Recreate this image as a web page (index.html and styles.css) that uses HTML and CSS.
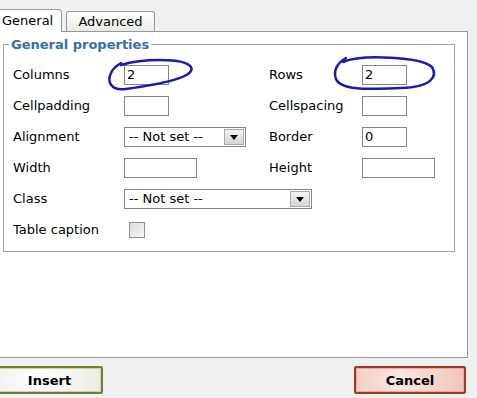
FILE: index.html
```html
<!DOCTYPE html>
<html lang="en">
<head>
    <meta charset="UTF-8">
    <title>Insert table</title>
    <link rel="stylesheet" href="styles.css">
</head>
<body>
    <div id="tabs">
        <span class="tab active">General</span>
        <span class="tab">Advanced</span>
    </div>
    <div id="panel">
        <fieldset>
            <legend>General properties</legend>
            <div class="form">
                <label>Columns</label>
                <span><input type="text" class="small" value="2"></span>
                <label>Rows</label>
                <span><input type="text" class="small" value="2"></span>

                <label>Cellpadding</label>
                <span><input type="text" class="small"></span>
                <label>Cellspacing</label>
                <span><input type="text" class="small"></span>

                <label>Alignment</label>
                <span><div class="select align">-- Not set --<span class="arrow"></span></div></span>
                <label>Border</label>
                <span><input type="text" class="small" value="0"></span>

                <label>Width</label>
                <span><input type="text" class="medium"></span>
                <label>Height</label>
                <span><input type="text" class="medium"></span>

                <label>Class</label>
                <span class="wide"><div class="select klass">-- Not set --<span class="arrow"></span></div></span>

                <label>Table caption</label>
                <span><span class="checkbox"></span></span>
            </div>
        </fieldset>
        <svg class="marks" width="469" height="120" viewBox="0 0 469 120">
            <!-- scribbles around the columns / rows fields, drawn in panel coords (y - 31) -->
            <path d="M121 33 C140 27, 184 25, 191 35 C196 45, 162 52, 126 57 C110 59, 107 49, 111 41 C113 36, 116 34, 121 31" />
            <path d="M343 30 C362 22, 421 25, 432 35 C438 45, 431 55, 401 56 C371 57, 341 59, 336 47 C333 39, 337 31, 346 26" />
        </svg>
    </div>
    <div id="buttons">
        <button type="button" class="insert">Insert</button>
        <button type="button" class="cancel">Cancel</button>
    </div>
</body>
</html>
```
FILE: styles.css
```css
body {
    margin: 0;
    background-color: #f0f0f0;
    font-family: 'DejaVu Sans', Verdana, sans-serif;
    font-size: 13px;
    color: #000000;
    overflow: hidden;
}
#tabs {
    display: flex;
    align-items: flex-end;
    height: 32px;
}
.tab {
    box-sizing: border-box;
    height: 21px;
    width: 89px;
    margin-left: 4px;
    padding-top: 2px;
    text-align: center;
    font-size: 13px;
    border: 1px solid #919b9c;
    border-bottom: none;
    border-radius: 3px 3px 0 0;
    background: linear-gradient(#ffffff, #e9e9e6);
}
.tab.active {
    position: relative;
    z-index: 1;
    width: 63px;
    height: 23px;
    margin-left: -1px;
    padding-top: 3px;
    text-align: left;
    text-indent: 2px;
    background: #ffffff;
    border-radius: 0 4px 0 0;
}
#panel {
    position: relative;
    box-sizing: border-box;
    width: 469px;
    height: 327px;
    margin: -1px 0 0 -1px;
    padding: 1px 0 0 3px;
    background-color: #ffffff;
    border: 1px solid #919b9c;
}
fieldset {
    box-sizing: border-box;
    width: 452px;
    margin: 4px 0 0 0;
    padding: 7px 0 6px 9px;
    border: 1px solid #a3a3a3;
}
legend {
    margin-left: -4px;
    padding: 0 2px;
    font-weight: bold;
    color: #3570a8;
}
.form {
    display: grid;
    grid-template-columns: 111px 145px 93px auto;
    grid-auto-rows: 31px;
    align-items: center;
}
.form span {
    display: flex;
    align-items: center;
}
.wide {
    grid-column: 2 / 5;
}
input {
    box-sizing: border-box;
    height: 20px;
    margin: 0;
    padding: 0 2px;
    border: 1px solid #858585;
    font-family: inherit;
    font-size: 13px;
    outline: none;
}
.small { width: 45px; }
.medium { width: 73px; }
.select {
    position: relative;
    box-sizing: border-box;
    height: 20px;
    padding: 1px 4px;
    border: 1px solid #858585;
    line-height: 16px;
}
.align { width: 122px; }
.klass { width: 188px; }
.arrow {
    position: absolute;
    top: 1px;
    right: 1px;
    width: 20px;
    height: 16px;
    box-sizing: border-box;
    border: 1px solid #a8a8a8;
    background: linear-gradient(#f4f4f4, #d4d4d4);
}
.arrow::after {
    content: "";
    position: absolute;
    left: 5px;
    top: 5px;
    border-left: 4px solid transparent;
    border-right: 4px solid transparent;
    border-top: 5px solid #000000;
}
.checkbox {
    width: 16px;
    height: 16px;
    margin-left: 5px;
    box-sizing: border-box;
    border: 1px solid #8f8f8f;
    background: linear-gradient(135deg, #dcdcdc, #f8f8f8);
}
.marks {
    position: absolute;
    left: 0;
    top: 0;
    pointer-events: none;
}
.marks path {
    fill: none;
    stroke: #1a1ab4;
    stroke-width: 2.5;
    stroke-linecap: round;
}
#buttons {
    display: flex;
    justify-content: space-between;
    margin-top: 8px;
}
#buttons button {
    box-sizing: border-box;
    height: 28px;
    font-family: inherit;
    font-size: 13px;
    font-weight: bold;
    color: #000000;
    border-radius: 2px;
    cursor: pointer;
}
.insert {
    width: 107px;
    margin-left: -4px;
    border: 2px solid #6f7c3e;
    box-shadow: inset 0 0 0 1px #cdd4a8;
    background: linear-gradient(90deg, #f2f2ee, #ffffff 40%, #ecece6);
}
.cancel {
    width: 112px;
    margin-right: 11px;
    border: 2px solid #9b3b26;
    box-shadow: inset 0 0 0 1px #e9ab9c;
    background: linear-gradient(90deg, #f3cfc4, #fbe7e1 40%, #efc6ba);
}
```
